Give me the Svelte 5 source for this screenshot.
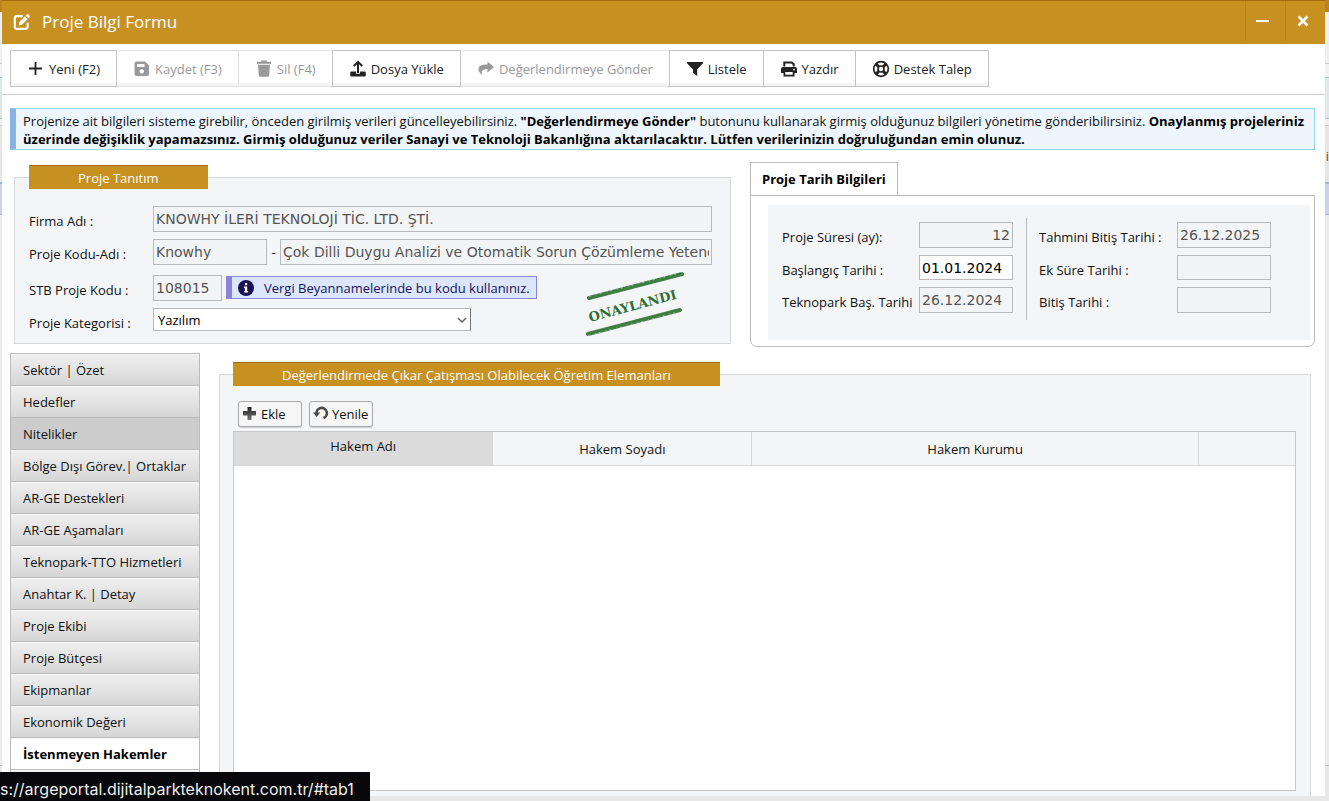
<script>
  const menu = [
    'Sektör | Özet',
    'Hedefler',
    'Nitelikler',
    'Bölge Dışı Görev.| Ortaklar',
    'AR-GE Destekleri',
    'AR-GE Aşamaları',
    'Teknopark-TTO Hizmetleri',
    'Anahtar K. | Detay',
    'Proje Ekibi',
    'Proje Bütçesi',
    'Ekipmanlar',
    'Ekonomik Değeri',
    'İstenmeyen Hakemler',
    ''
  ];
  const hovered = 'Nitelikler';
  const active = 'İstenmeyen Hakemler';

  const tools = [
    { icon: 'plus', label: 'Yeni (F2)' },
    { icon: 'save', label: 'Kaydet (F3)', disabled: true },
    { icon: 'trash', label: 'Sil (F4)', disabled: true },
    { icon: 'upload', label: 'Dosya Yükle' },
    { icon: 'share', label: 'Değerlendirmeye Gönder', disabled: true },
    { icon: 'filter', label: 'Listele' },
    { icon: 'print', label: 'Yazdır' },
    { icon: 'ring', label: 'Destek Talep' }
  ];
</script>

<div class="desktop">
  <span class="behind">i</span>
  <div class="window">
    <header class="titlebar">
      <svg width="18" height="18" viewBox="0 0 18 18" fill="none" stroke="#fff" aria-hidden="true">
        <path d="M9 3.2H3.6A1.8 1.8 0 0 0 1.8 5v9A1.8 1.8 0 0 0 3.6 15.800h9.200A1.800 1.800 0 0 0 14.600 14v-3.500" stroke-width="2.200" stroke-linecap="round" />
        <path d="M5.800 12.300 6.400 9 12 3.300l2.700 2.700-5.700 5.700z" fill="#fff" stroke="none" />
        <path d="M12.700 2.600 13.800 1.500a1.200 1.200 0 0 1 1.700 0l1 1a1.200 1.200 0 0 1 0 1.700l-1.100 1.100z" fill="#fff" stroke="none" />
      </svg>
      <h1>Proje Bilgi Formu</h1>
      <button class="wbtn" aria-label="Küçült">
        <svg width="14" height="14" viewBox="0 0 14 14"><path d="M0 7h13" stroke="#fff" stroke-width="2" /></svg>
      </button>
      <button class="wbtn" aria-label="Kapat">
        <svg width="12" height="12" viewBox="0 0 12 12"><path d="M1.500 1.500l9 9M10.500 1.500l-9 9" stroke="#fff" stroke-width="2.600" /></svg>
      </button>
    </header>

    <nav class="toolbar">
      {#each tools as t}
        <button class="tool" disabled={t.disabled}>
          <svg width="18" height="18" viewBox="0 0 18 18" fill="currentColor" aria-hidden="true">
            {#if t.icon === 'plus'}
              <path d="M8.500 2v13M2 8.500h13" stroke="currentColor" stroke-width="1.800" fill="none" />
            {:else if t.icon === 'save'}
              <path fill-rule="evenodd" d="M3.500 1.500h8.500l4 4v8.500a2 2 0 0 1-2 2H3.500a2 2 0 0 1-2-2v-10.500a2 2 0 0 1 2-2zM4 4v3h7.500V4zM8.800 9.200a2.200 2.200 0 1 0 .01 0z" />
            {:else if t.icon === 'trash'}
              <path d="M6.500 .5h5l.8 1.300H16v2H2v-2h3.700zM3 4.800h12l-.8 10.500a1.600 1.600 0 0 1-1.600 1.500H5.400a1.600 1.600 0 0 1-1.600-1.500z" />
            {:else if t.icon === 'upload'}
              <path d="M9 2v11M4.800 6 9 1.800 13.200 6" fill="none" stroke="currentColor" stroke-width="2" />
              <path d="M2.500 11.500H7v2.300h4v-2.300h4.500a1.300 1.300 0 0 1 1.300 1.300v2.400a1.300 1.300 0 0 1-1.300 1.300h-13a1.300 1.300 0 0 1-1.300-1.300v-2.400a1.300 1.300 0 0 1 1.300-1.300z" />
            {:else if t.icon === 'share'}
              <path d="M10.500 1.500 17 7l-6.500 5.500V9.300C5.500 9.300 4 10.500 5.200 15 2.500 13 1.500 11 1.500 9.200c0-3.700 3.500-4.700 9-4.700z" />
            {:else if t.icon === 'filter'}
              <path d="M1.200 2h15.600a.6.6 0 0 1 .4 1L11.200 9.500V16L7 13V9.500L.8 3a.6.6 0 0 1 .4-1z" />
            {:else if t.icon === 'print'}
              <path d="M4.300 6.500V2.500h7.400l2 1.800v2.200" fill="none" stroke="currentColor" stroke-width="2" />
              <path fill-rule="evenodd" d="M3 7h12a2 2 0 0 1 2 2v4h-2.500v3.500h-11V13H1V9a2 2 0 0 1 2-2zM5.300 12v2.700h7.400V12zM14 8.800a.8.8 0 1 0 .01 0z" />
            {:else}
              <g fill="none" stroke="currentColor">
                <circle cx="9" cy="9" r="7.300" stroke-width="1.700" />
                <circle cx="9" cy="9" r="3" stroke-width="1.600" />
                <path d="M4 4l2.800 2.800M14 4l-2.800 2.800M4 14l2.800-2.800M14 14l-2.800-2.800" stroke-width="3" />
              </g>
            {/if}
          </svg>
          <span>{t.label}</span>
        </button>
      {/each}
    </nav>

    <p class="notice">
      Projenize ait bilgileri sisteme girebilir, önceden girilmiş verileri güncelleyebilirsiniz.
      <b>"Değerlendirmeye Gönder"</b> butonunu kullanarak girmiş olduğunuz bilgileri yönetime gönderibilirsiniz.
      <b>Onaylanmış projeleriniz üzerinde değişiklik yapamazsınız. Girmiş olduğunuz veriler Sanayi ve Teknoloji
      Bakanlığına aktarılacaktır. Lütfen verilerinizin doğruluğundan emin olunuz.</b>
    </p>

    <div class="top">
      <fieldset class="intro">
        <legend>Proje Tanıtım</legend>
        <div class="field">
          <label for="firma">Firma Adı :</label>
          <input id="firma" readonly value="KNOWHY İLERİ TEKNOLOJİ TİC. LTD. ŞTİ." />
        </div>
        <div class="field">
          <label for="kod">Proje Kodu-Adı :</label>
          <div class="line">
            <input id="kod" class="code" readonly value="Knowhy" />
            <span class="dash">-</span>
            <input class="grow" aria-label="Proje Adı" readonly value="Çok Dilli Duygu Analizi ve Otomatik Sorun Çözümleme Yeteneği" />
          </div>
        </div>
        <div class="field stb">
          <label for="stb">STB Proje Kodu :</label>
          <div class="line">
            <input id="stb" class="short" readonly value="108015" />
            <div class="hint">
              <svg width="16" height="16" viewBox="0 0 16 16" aria-hidden="true">
                <circle cx="8" cy="8" r="8" fill="#191356" />
                <path d="M7 3h2.200v2.200H7zM6 6.600h3.200v4.400h1v1.600H6V11h1V8.200H6z" fill="#fff" />
              </svg>
              <span>Vergi Beyannamelerinde bu kodu kullanınız.</span>
            </div>
          </div>
        </div>
        <div class="field">
          <label for="kategori">Proje Kategorisi :</label>
          <div class="pick">
            <select id="kategori"><option>Yazılım</option></select>
            <svg width="10" height="6" viewBox="0 0 10 6" aria-hidden="true"><path d="M1 1l4 4 4-4" fill="none" stroke="#666" stroke-width="1.500" /></svg>
          </div>
        </div>
        <svg class="stamp" width="98" height="66" viewBox="0 0 98 66">
          <g stroke="#3f7d42" stroke-linecap="round">
            <path d="M3 27 96 3" stroke-width="4" />
            <path d="M2 63 94 39" stroke-width="4" />
          </g>
          <g stroke="#f4f5f7" stroke-width="1" stroke-dasharray="2 5 1 3" opacity=".5">
            <path d="M3 25.500 96 1.500M2 64.500 94 40.500" />
          </g>
          <text x="4" y="51" transform="rotate(-15 4 51)">ONAYLANDI</text>
        </svg>
      </fieldset>

      <section class="dates">
        <button class="tab">Proje Tarih Bilgileri</button>
        <div class="panel">
          <div class="inner">
            <div class="col">
              <label for="sure">Proje Süresi (ay):</label>
              <input id="sure" class="num" readonly value="12" />
              <label for="bas">Başlangıç Tarihi :</label>
              <input id="bas" class="edit" value="01.01.2024" />
              <label for="tbas">Teknopark Baş. Tarihi</label>
              <input id="tbas" readonly value="26.12.2024" />
            </div>
            <div class="col second">
              <label for="tbit">Tahmini Bitiş Tarihi :</label>
              <input id="tbit" readonly value="26.12.2025" />
              <label for="ek">Ek Süre Tarihi :</label>
              <input id="ek" readonly />
              <label for="bit">Bitiş Tarihi :</label>
              <input id="bit" readonly />
            </div>
          </div>
        </div>
      </section>
    </div>

    <div class="bottom">
      <nav class="side">
        {#each menu as m}
          <a href="#tab1" class:hovered={m === hovered} class:active={m === active}>{m}</a>
        {/each}
      </nav>
      <fieldset class="referees">
        <legend>Değerlendirmede Çıkar Çatışması Olabilecek Öğretim Elemanları</legend>
        <div class="actions">
          <button>
            <svg width="16" height="16" viewBox="0 0 16 16" aria-hidden="true">
              <defs><linearGradient id="g" x2="0" y2="1"><stop stop-color="#222" /><stop offset="1" stop-color="#777" /></linearGradient></defs>
              <path d="M5.500 1h4v4H14v4.500H9.500V14h-4V9.500H1V5h4.500z" fill="url(#g)" />
            </svg>
            Ekle
          </button>
          <button>
            <svg width="16" height="16" viewBox="0 0 16 16" aria-hidden="true">
              <path d="M3.500 7.500A5.200 5.200 0 1 1 10.500 12" fill="none" stroke="#4a4a4a" stroke-width="2.600" />
              <path d="M0 6.500h7.200L3.600 11z" fill="#4a4a4a" />
            </svg>
            Yenile
          </button>
        </div>
        <div class="gridbox">
          <table>
            <colgroup><col class="c1" /><col class="c2" /><col class="c3" /><col class="c4" /></colgroup>
            <thead>
              <tr><th class="sorted">Hakem Adı</th><th>Hakem Soyadı</th><th>Hakem Kurumu</th><th></th></tr>
            </thead>
          </table>
        </div>
      </fieldset>
    </div>
  </div>
  <div class="status">s://argeportal.dijitalparkteknokent.com.tr/#tab1</div>
</div>

<style>
  :global(body) {
    margin: 0;
  }
  .desktop,
  .desktop * {
    box-sizing: border-box;
  }
  .desktop {
    position: relative;
    height: 100vh;
    padding: 0 4px 5px 2px;
    overflow: hidden;
    display: flex;
    font: 13px/18px 'Open Sans', 'Noto Sans', sans-serif;
    color: #111;
    background: linear-gradient(
      #b9841b 0 12px, #efefef 12px 63px, #c8c8c8 63px 64px, #f2f2f2 64px 77px, #8ccdd8 77px 78px,
      #dfe8e9 78px 118px, #8ccdd8 118px 119px, #f0f0f0 119px 125px, #ccc 125px 126px, #e6e6e6 126px 182px,
      #9fb4dc 182px 184px, #ccd3e8 184px 214px, #9fb4dc 214px 215px, #ebebeb 215px 765px, #bbb 765px 766px,
      #e8e8e8 766px
    );
  }
  .behind {
    position: absolute;
    right: 0;
    top: 147px;
    color: #8a4a08;
  }
  button,
  input,
  select {
    font: inherit;
    color: inherit;
    margin: 0;
  }
  svg {
    display: block;
    flex: none;
  }
  .window {
    flex: 1;
    min-width: 0;
    display: flex;
    flex-direction: column;
    background: #fff;
    overflow: hidden;
  }
  .titlebar {
    flex: none;
    height: 44px;
    display: flex;
    align-items: center;
    padding: 0 0 2px 11px;
    background: #c79121;
    border-top: 1px solid #a16b0b;
  }
  h1 {
    flex: 1;
    margin: 0 0 0 11px;
    font-size: 17px;
    font-weight: 400;
    color: #fff;
  }
  .wbtn {
    width: 40px;
    height: 40px;
    align-self: flex-start;
    display: grid;
    place-items: center;
    padding: 0 6px 0 0;
    background: none;
    border: 0;
    border-left: 1px solid #b78319;
  }
  .toolbar {
    flex: none;
    display: flex;
    padding: 6px 8px 7px;
    border-bottom: 1px solid #d0d0d0;
  }
  .tool {
    height: 37px;
    display: flex;
    align-items: center;
    gap: 4px;
    padding: 0 16px;
    margin-left: -1px;
    background: #fff;
    border: 1px solid #c4c4c4;
    box-shadow: inset 0 -3px 0 #f5f5f5;
    color: #222;
    position: relative;
    z-index: 1;
  }
  .tool:first-child {
    margin-left: 0;
  }
  .tool:disabled {
    color: #999;
    border-color: #e2e2e2;
    z-index: 0;
  }
  .notice {
    flex: none;
    margin: 13px 10px 0 8px;
    padding: 3px 8px 1px 7px;
    background: #ecf6fc;
    border: 1px solid #8fdae3;
    border-left: 6px solid #8bb2e6;
    color: #111;
  }
  b {
    color: #000;
  }
  .top {
    flex: none;
    display: grid;
    grid-template-columns: 717fr 565fr;
    gap: 19px;
    margin: 12px 10px 0 12px;
  }
  fieldset {
    min-width: 0;
    margin: 0;
    border: 1px solid #d8d8d8;
    background: #f4f5f7;
  }
  legend {
    height: 24px;
    padding: 3px 49px 0;
    background: #c79121;
    border-top: 1px solid #a16b0b;
    color: #fff;
    line-height: 18px;
  }
  .intro {
    position: relative;
    align-self: start;
    margin-top: 3px;
    padding: 17px 18px 12px 14px;
  }
  .field {
    display: grid;
    grid-template-columns: 124px minmax(0, 1fr);
    height: 26px;
    margin-bottom: 7px;
  }
  .field:last-of-type {
    height: 23px;
    margin-bottom: 0;
  }
  .stb {
    margin-top: 10px;
  }
  label {
    padding-top: 6px;
    line-height: 18px;
    white-space: nowrap;
  }
  input {
    min-width: 0;
    width: 100%;
    height: 26px;
    padding: 0 2px;
    border: 1px solid #b9babb;
    border-radius: 0;
    background: #f3f4f5;
    color: #555;
    font: 14px 'DejaVu Sans', sans-serif;
  }
  .line {
    display: flex;
  }
  .code {
    width: 114px;
  }
  .dash {
    width: 13px;
    text-align: center;
    line-height: 26px;
  }
  .grow {
    flex: 1;
  }
  .short {
    width: 69px;
    margin-right: 4px;
  }
  .hint {
    display: flex;
    align-items: center;
    gap: 10px;
    height: 23px;
    margin-top: 1px;
    padding: 0 6px;
    background: #dce7fd;
    border: 1px solid #8b84dc;
    border-left-width: 6px;
    color: #191356;
    white-space: nowrap;
  }
  .pick {
    display: grid;
    width: 318px;
    align-items: center;
    align-self: start;
  }
  .pick > * {
    grid-area: 1 / 1;
  }
  .pick svg {
    justify-self: end;
    margin-right: 4px;
    pointer-events: none;
  }
  select {
    appearance: none;
    height: 23px;
    padding: 0 4px;
    border: 1px solid #b9babb;
    border-right-color: #777;
    border-radius: 0;
    background: #fff;
    color: #000;
  }
  .stamp {
    position: absolute;
    right: 46px;
    bottom: 6px;
  }
  .stamp text {
    font: bold 13px 'DejaVu Serif', serif;
    fill: #2c6e31;
  }
  .dates {
    display: flex;
    flex-direction: column;
  }
  .tab {
    align-self: flex-start;
    height: 33px;
    padding: 0 11px;
    background: #fff;
    border: 1px solid #bbb;
    border-bottom: 0;
    font-weight: 700;
    color: #000;
  }
  .panel {
    flex: 1;
    padding: 9px 4px 6px 17px;
    border: 1px solid #bbb;
    border-radius: 0 0 7px 7px;
  }
  .inner {
    display: flex;
    padding: 13px 14px 20px;
    background: #f4f5f7;
  }
  .col {
    display: grid;
    grid-template-columns: 137px 94px;
    grid-template-rows: 26px 25px 26px;
    row-gap: 7px;
    align-content: start;
    padding: 4px 13px 7px 0;
  }
  .col input {
    height: 100%;
  }
  .second {
    grid-template-columns: 138px 94px;
    padding-left: 12px;
    border-left: 1px solid #bbb;
  }
  .num {
    text-align: right;
  }
  .edit {
    background: #fff;
    color: #000;
  }
  .bottom {
    flex: 1;
    min-height: 0;
    display: flex;
    margin: 6px 14px 0 8px;
  }
  .side {
    flex: none;
    width: 190px;
    border: 1px solid #bbb;
    border-bottom: 0;
    overflow: hidden;
  }
  .side a {
    display: block;
    height: 32px;
    padding: 6px 12px;
    border-bottom: 1px solid #bbb;
    border-top: 1px solid #f6f6f6;
    background: linear-gradient(#efefef, #d6d6d6);
    color: #111;
    text-decoration: none;
    line-height: 18px;
    white-space: nowrap;
  }
  .side .hovered {
    background: #ccc;
    border-top-color: #ccc;
  }
  .side .active {
    background: #fff;
    color: #000;
    font-weight: 700;
  }
  .referees {
    flex: 1;
    display: flex;
    flex-direction: column;
    margin: 9px 0 0 19px;
    padding: 15px 14px 5px 13px;
    border-bottom: 0;
  }
  .actions {
    flex: none;
    display: flex;
    gap: 7px;
    padding: 0 5px;
    margin-bottom: 4px;
  }
  .actions button {
    min-width: 64px;
    height: 26px;
    display: flex;
    align-items: center;
    gap: 3px;
    padding: 0 3px;
    background: #f6f6f6;
    border: 1px solid #aaa;
    border-radius: 3px;
    box-shadow: 0 1px 1px #ccc;
  }
  .gridbox {
    flex: 1;
    min-height: 0;
    background: #fff;
    border: 1px solid #c8c8c8;
  }
  table {
    width: 100%;
    border-collapse: collapse;
    table-layout: fixed;
  }
  .c1,
  .c2 {
    width: 24.4%;
  }
  .c3 {
    width: 42.1%;
  }
  .c4 {
    width: 9.1%;
  }
  th {
    height: 33px;
    padding: 2px 0 0;
    background: #f4f5f7;
    border-right: 1px solid #d8d8d8;
    border-bottom: 1px solid #d8d8d8;
    font-weight: 400;
  }
  th:last-child {
    border-right: 0;
  }
  .sorted {
    padding: 0 0 4px;
    background: #dbdbdb;
  }
  .status {
    position: absolute;
    left: 0;
    bottom: 0;
    width: 370px;
    height: 29px;
    padding-top: 8px;
    background: #08080a;
    color: #eee;
    font: 16px/18px Inter, sans-serif;
    white-space: nowrap;
  }
</style>
